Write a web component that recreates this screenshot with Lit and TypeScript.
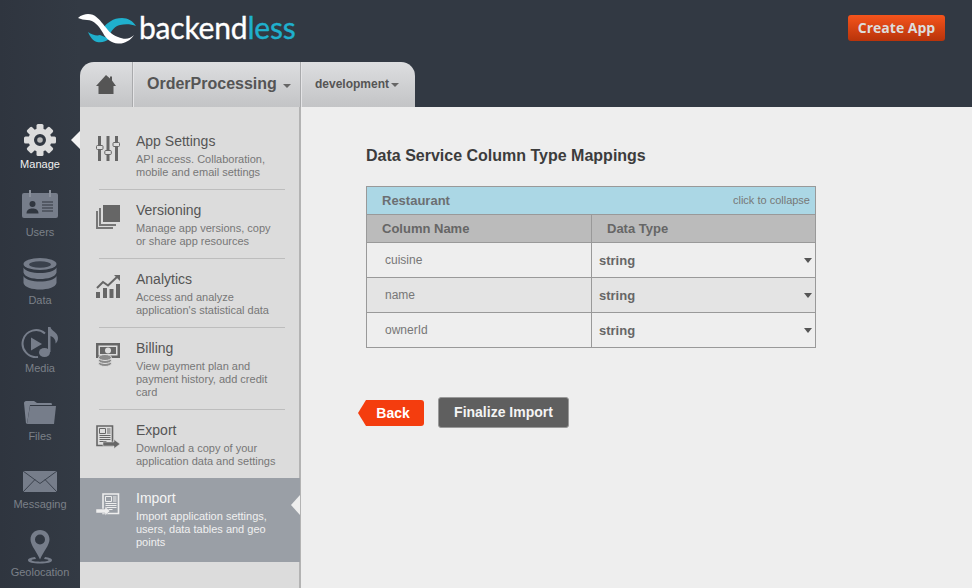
import { LitElement, html, css, svg } from "lit";
import { customElement } from "lit/decorators.js";

const gear = () => {
  const teeth = [0, 45, 90, 135, 180, 225, 270, 315].map(
    (a) => svg`<rect x="12.5" y="0" width="7" height="8" rx="1.5" transform="rotate(${a} 16 16)"/>`
  );
  return html`<svg width="32" height="32" viewBox="0 0 32 32"><g fill="#dcdcdc">${teeth}<path fill-rule="evenodd" d="M16 4.500a11.500 11.500 0 1 0 0 23a11.500 11.500 0 0 0 0-23zM16 10a6 6 0 1 1 0 12a6 6 0 0 1 0-12z"/></g><circle cx="16" cy="16" r="2.800" fill="#b9b9b9"/></svg>`;
};

const G = "#767d8a";
const railIcons: Record<string, any> = {
  Manage: gear(),
  Users: html`<svg width="36" height="28" viewBox="0 0 36 28"><rect x="0" y="3" width="36" height="25" rx="2" fill="${G}"/><rect x="7" y="0" width="2" height="7" fill="#8a909b"/><rect x="27" y="0" width="2" height="7" fill="#8a909b"/><circle cx="10.500" cy="14" r="3" fill="#30363f"/><path d="M4.500 23.500c0-4 3-5 6-5s6 1 6 5z" fill="#30363f"/><path d="M20 12h11M20 15h11M20 18h11M20 21h11" stroke="#30363f" stroke-width="1.200"/></svg>`,
  Data: html`<svg width="34" height="32" viewBox="0 0 34 32"><ellipse cx="17" cy="6" rx="16.500" ry="6" fill="${G}"/><ellipse cx="17" cy="6.500" rx="11" ry="3.200" fill="#3a414c"/><path d="M.5 9.500c2 4 9 5.500 16.500 5.500s14.500-1.500 16.500-5.500v5c-1 4.500-9 6.500-16.500 6.500S1.500 19 .5 14.500z" fill="${G}"/><path d="M.5 18c2 4 9 5.500 16.500 5.500s14.500-1.500 16.500-5.500v7c-1 4.500-9 6.500-16.500 6.500S1.500 29.500.5 25z" fill="${G}"/></svg>`,
  Media: html`<svg width="38" height="32" viewBox="0 0 38 32"><path d="M24 7.500A13.500 13.500 0 1 0 17 31" fill="none" stroke="${G}" stroke-width="2"/><path d="M10 11.500l11 6.500-11 6.500z" fill="${G}"/><ellipse cx="23.500" cy="26.500" rx="5.500" ry="4.500" fill="${G}"/><path d="M27 1h2.500c.5 4 7.500 5 7.500 11 0 2.500-1 4.500-2.500 5.500 .5-4-2-6.500-5-7.500V26h-2.500z" fill="${G}"/></svg>`,
  Files: html`<svg width="32" height="23" viewBox="0 0 32 23"><path d="M0 2C0 1 1 0 2 0h8l3 2h14.500L28 4H6L3 22.500H2z" fill="#7c8390"/><path d="M6 5h26l-2 18H3z" fill="${G}"/></svg>`,
  Messaging: html`<svg width="34" height="21" viewBox="0 0 34 21"><rect width="34" height="21" fill="${G}"/><path d="M0 0l17 12.500L34 0M0 21l12-12.500M34 21L22 8.500" fill="none" stroke="#3b424d" stroke-width="1"/></svg>`,
  Geolocation: html`<svg width="26" height="34" viewBox="0 0 26 34"><path fill-rule="evenodd" d="M13 0c5.500 0 9.500 4 9.500 9.500 0 5.500-6 12-9.500 20-3.500-8-9.500-14.500-9.500-20C3.500 4 7.500 0 13 0zm0 4.500a5 5 0 1 0 0 10a5 5 0 0 0 0-10z" fill="${G}"/><path d="M8 27c-4 .5-7 1.500-7 3.200C1 32.500 6 33.500 13 33.500s12-1 12-3.300c0-1.700-3-2.700-7-3.200l-1 2c3 .2 4.500.7 4.500 1.300 0 .8-3.500 1.400-8.500 1.400s-8.500-.6-8.500-1.400c0-.6 1.500-1.100 4.500-1.300z" fill="${G}"/></svg>`,
};

const D = "#666";
const docIcon = (c: string, bg: string) => svg`<path d="M1 1h15.500v19.500H1z" fill="${bg}" stroke="${c}" stroke-width="1.600"/><path d="M3.500 3.500h6v5h-6z" fill="none" stroke="${c}" stroke-width="1"/><path d="M11 4h3.500M11 6h3.500M11 8h3.500M3.500 10.500h11M3.500 12.500h11M3.500 14.500h11M3.500 16.500h7" stroke="${c}" stroke-width="1"/>`;
const navIcons: Record<string, any> = {
  settings: html`<svg width="24" height="25" viewBox="0 0 24 25"><g fill="${D}"><rect x="2" y="0" width="3" height="25"/><rect x="10.500" y="0" width="3" height="25"/><rect x="19" y="0" width="3" height="25"/></g><g fill="#ddd" stroke="${D}" stroke-width="1"><rect x=".5" y="9.500" width="6.500" height="4" rx="1"/><rect x="8.800" y="14.500" width="6.500" height="4" rx="1"/><rect x="17" y="6.500" width="6.500" height="4" rx="1"/></g></svg>`,
  versions: html`<svg width="24" height="24" viewBox="0 0 24 24"><path d="M0 6h2v16h15v2H0z" fill="#777"/><path d="M3 3h2v16h15v2H3z" fill="#777"/><rect x="7" y="0" width="17" height="17" fill="#666"/></svg>`,
  analytics: html`<svg width="24" height="24" viewBox="0 0 24 24"><g fill="${D}"><rect x="0" y="18" width="4" height="6"/><rect x="7" y="14" width="4" height="10"/><rect x="13.500" y="15" width="4" height="9"/><rect x="20" y="10" width="4" height="14"/></g><path d="M1 14l6-6 5 3.500L22 2" fill="none" stroke="${D}" stroke-width="2"/><path d="M18 1h6v6z" fill="${D}"/></svg>`,
  billing: html`<svg width="24" height="24" viewBox="0 0 24 24"><rect x="0" y="0" width="24" height="15" fill="${D}"/><rect x="2.500" y="2.500" width="19" height="10" fill="#ddd"/><rect x="4" y="4" width="16" height="7" fill="${D}"/><circle cx="12" cy="7.500" r="3" fill="#ddd"/><g fill="#8a8a8a" stroke="#dcdcdc" stroke-width="1"><ellipse cx="9" cy="20.500" rx="6.500" ry="3"/><ellipse cx="9" cy="17.500" rx="6.500" ry="3"/><ellipse cx="9" cy="14.500" rx="6.500" ry="3"/></g></svg>`,
  export: html`<svg width="24" height="24" viewBox="0 0 24 24">${docIcon(D, "#ddd")}<path d="M7 17h11v-2.500l6 4.500-6 4.500V21H7z" fill="${D}" stroke="#ddd" stroke-width=".5"/></svg>`,
  import: html`<svg width="24" height="24" viewBox="0 0 24 24"><g transform="translate(6 0)">${docIcon("#eee", "#9a9fa6")}</g><path d="M0 16h9v-2.500l5 4.500-5 4.500V20H0z" fill="#eee" stroke="#9a9fa6" stroke-width=".5"/></svg>`,
};

const navItems = [
  { key: "settings", title: "App Settings", lines: ["API access. Collaboration,", "mobile and email settings"] },
  { key: "versions", title: "Versioning", lines: ["Manage app versions, copy", "or share app resources"] },
  { key: "analytics", title: "Analytics", lines: ["Access and analyze", "application's statistical data"] },
  { key: "billing", title: "Billing", lines: ["View payment plan and", "payment history, add credit", "card"] },
  { key: "export", title: "Export", lines: ["Download a copy of your", "application data and settings"] },
  { key: "import", title: "Import", lines: ["Import application settings,", "users, data tables and geo", "points"] },
];

@customElement("app-root")
export class AppRoot extends LitElement {
  static styles = css`
    :host { display: block; width: 972px; height: 588px; overflow: hidden; background: #323943; font-family: "Liberation Sans", Arial, sans-serif; }
    .shell { display: grid; grid-template-columns: 80px 1fr; height: 588px; }
    .rail { display: flex; flex-direction: column; padding-top: 116px; background: linear-gradient(90deg, #2f353f 0, #333a44 100%); }
    .ri { height: 68px; flex: none; display: flex; flex-direction: column; align-items: center; position: relative; }
    .ri .ic { height: 40px; display: flex; align-items: flex-end; justify-content: center; box-sizing: border-box; }
    .ri:nth-child(1) .ic { padding-bottom: 0; }
    .ri:nth-child(2) .ic { padding-bottom: 6px; }
    .ri:nth-child(3) .ic { padding-bottom: 2px; }
    .ri:nth-child(4) .ic { padding-bottom: 2px; }
    .ri:nth-child(5) .ic { padding-bottom: 4px; }
    .ri:nth-child(6) .ic { padding-bottom: 4px; }
    .ri:nth-child(7) .ic { padding-bottom: 0; }
    .ri .lb { font-size: 11px; line-height: 16px; color: #7b8088; }
    .ri.on .lb { color: #f0f0f0; }
    .ri.on::after { content: ""; position: absolute; right: 0; top: 15px; border: 9px solid transparent; border-right-color: #f2f2f2; border-left: 0; }
    .main { display: flex; flex-direction: column; min-width: 0; }
    .head { height: 62px; flex: none; display: flex; justify-content: space-between; box-sizing: border-box; }
    .logo { display: flex; align-items: flex-start; padding-top: 14px; margin-left: -2px; }
    .logo svg { flex: none; }
    .word { font-family: "Lato", sans-serif; font-size: 30px; line-height: 30px; letter-spacing: -.2px; color: #fff; font-weight: 400; margin-left: 3px; margin-top: -2px; -webkit-text-stroke: .35px currentColor; }
    .word span { color: #1fb0cd; }
    .create { margin: 15px 27px 0 0; width: 97px; height: 26px; box-sizing: border-box; border-radius: 3px; background: linear-gradient(#f5541c, #b8330a); color: #ddd; font: 700 14px/26px "Open Sans", sans-serif; text-align: center; }
    .tabs { height: 45px; width: 335px; flex: none; display: flex; border-radius: 14px 14px 0 0; background: linear-gradient(#dddee0, #c3c4c6); color: #555; font-weight: 700; align-items: stretch; }
    .t { display: flex; align-items: center; border-right: 1px solid #a9aaac; box-shadow: 1px 0 0 #e4e4e6; box-sizing: border-box; }
    .t.home { width: 53px; justify-content: center; }
    .t.proj { width: 168px; padding-left: 14px; font-size: 16px; padding-bottom: 1px; }
    .t.env { flex: 1; border: 0; box-shadow: none; padding-left: 14px; font-size: 12px; padding-bottom: 2px; }
    .car { display: inline-block; border: 4px solid transparent; border-top: 4px solid #666; border-bottom: 0; margin-left: 6px; margin-top: 3px; }
    .t.env .car { margin-left: 2px; }
    .body { flex: 1; display: flex; min-height: 0; }
    .side { width: 221px; flex: none; box-sizing: border-box; background: #dcdcdc; border-right: 2px solid #b3b3b3; padding-top: 14px; }
    .ni { display: grid; grid-template-columns: 56px 1fr; padding: 10px 0 0; position: relative; margin-right: -1px; }
    .nicon { padding: 5px 0 0 16px; }
    .ttl { font-size: 14px; line-height: 20px; color: #555; }
    .dsc { font-size: 11px; line-height: 13px; color: #777; margin-top: 2px; padding-bottom: 10px; }
    .ni:not(.noline)::after { content: ""; position: absolute; left: 19px; width: 186px; bottom: 0; height: 1px; background: #bdbdbd; }
    .ni:not(.noline) { padding-bottom: 1px; }
    .ni.on { background: #9a9fa6; padding-bottom: 3px; }
    .ni.on .ttl { color: #f4f4f4; }
    .ni.on .dsc { color: #f0f0f0; }
    .ni.on::before { content: ""; position: absolute; right: 0; top: 17px; border: 10px solid transparent; border-right: 9px solid #eee; border-left: 0; }
    .content { flex: 1; background: #eee; padding: 39px 0 0 65px; color: #444; min-width: 0; }
    h2 { margin: 0; font-size: 16px; line-height: 20px; font-weight: 700; color: #3c3c3c; }
    .tbl { width: 450px; margin-top: 20px; border: 1px solid #999; box-sizing: border-box; display: flex; flex-direction: column; }
    .band { height: 28px; box-sizing: border-box; background: #abd7e5; border-bottom: 1px solid #999; display: flex; justify-content: space-between; align-items: center; padding: 0 5px 1px 15px; color: #6b6f72; }
    .band b { font-size: 13px; }
    .band span { font-size: 11px; color: #777; }
    .row { display: grid; grid-template-columns: 225px 1fr; box-sizing: border-box; }
    .row > div { display: flex; align-items: center; box-sizing: border-box; }
    .row > div:first-child { border-right: 1px solid #999; }
    .hdr { height: 28px; background: #bbb; border-bottom: 1px solid #999; color: #666; font-weight: 700; font-size: 13px; }
    .hdr > div { padding-left: 15px; }
    .dr { height: 35px; background: #eee; border-bottom: 1px solid #999; }
    .dr.alt { background: #e4e4e4; }
    .dr:last-child { border-bottom: 0; height: 34px; }
    .dr > div:first-child { padding: 0 0 1px 18px; font-size: 12px; color: #777; }
    .dr > div:last-child { padding: 0 3px 0 7px; justify-content: space-between; font-size: 13px; font-weight: 700; color: #666; }
    .dr .car { border-top: 5px solid #555; margin: 0; }
    .btns { display: flex; align-items: center; gap: 14px; margin: 49px 0 0 -8px; }
    .back { position: relative; margin-left: 8px; width: 58px; height: 26px; background: #f43d0e; color: #fff; font-size: 14px; font-weight: 700; line-height: 26px; text-align: center; border-radius: 0 3px 3px 0; box-sizing: border-box; padding-right: 4px; }
    .back::before { content: ""; position: absolute; left: -8px; top: 0; border: 13px solid transparent; border-right: 8px solid #f43d0e; border-left: 0; }
    .fin { width: 131px; height: 31px; box-sizing: border-box; background: #5f5f5f; border: 1px solid #999; border-radius: 3px; color: #f4f4f4; font-size: 14px; font-weight: 700; line-height: 29px; text-align: center; }
  `;

  render() {
    const rail = ["Manage", "Users", "Data", "Media", "Files", "Messaging", "Geolocation"];
    const rows = ["cuisine", "name", "ownerId"];
    return html`<div class="shell">
      <nav class="rail">
        ${rail.map((r, i) => html`<div class="ri ${i === 0 ? "on" : ""}"><div class="ic">${railIcons[r]}</div><div class="lb">${r}</div></div>`)}
      </nav>
      <div class="main">
        <header class="head">
          <div class="logo">
            <svg width="58" height="30" viewBox="0 0 58 30">
              <path d="M25 14C29 9 35 4 44 4 50 4 55 7 58 12 53 10 47 10 42 11 37 12 34 16 32 20z" fill="#1fb0cd" />
              <path d="M10 18C14 21 19 22 22 21 25 22 29 24 32 24 28 28 23 29 19 28 15 27 12 23 10 18z" fill="#1fb0cd" />
              <path d="M0 4C3 1 7 0 10 0 17 0 21 5 25 10 29 15 33 21 40 23 47 26 52 25 56 21 52 27 46 30 40 29.500 33 29 28 25 25 19 21 12 16 6 9 6 6 6 3 5 0 4z" fill="#fff" />
            </svg>
            <div class="word">backend<span>less</span></div>
          </div>
          <div class="create">Create App</div>
        </header>
        <div class="tabs">
          <div class="t home"><svg width="20" height="19" viewBox="0 0 20 19"><path d="M10 0l4 3.500V1.500h2v4l4 5.500h-2.500v8h-15v-8H0z" fill="#555"/></svg></div>
          <div class="t proj">OrderProcessing<i class="car"></i></div>
          <div class="t env">development<i class="car"></i></div>
        </div>
        <div class="body">
          <aside class="side">
            ${navItems.map((n) => html`<div class="ni ${n.key === "import" ? "on noline" : ""} ${n.key === "export" ? "noline" : ""}">
              <div class="nicon">${navIcons[n.key]}</div>
              <div><div class="ttl">${n.title}</div><div class="dsc">${n.lines.map((l) => html`${l}<br />`)}</div></div>
            </div>`)}
          </aside>
          <main class="content">
            <h2>Data Service Column Type Mappings</h2>
            <div class="tbl">
              <div class="band"><b>Restaurant</b><span>click to collapse</span></div>
              <div class="row hdr"><div>Column Name</div><div>Data Type</div></div>
              ${rows.map((r, i) => html`<div class="row dr ${i === 1 ? "alt" : ""}"><div>${r}</div><div>string<i class="car"></i></div></div>`)}
            </div>
            <div class="btns"><div class="back">Back</div><div class="fin">Finalize Import</div></div>
          </main>
        </div>
      </div>
    </div>`;
  }
}
